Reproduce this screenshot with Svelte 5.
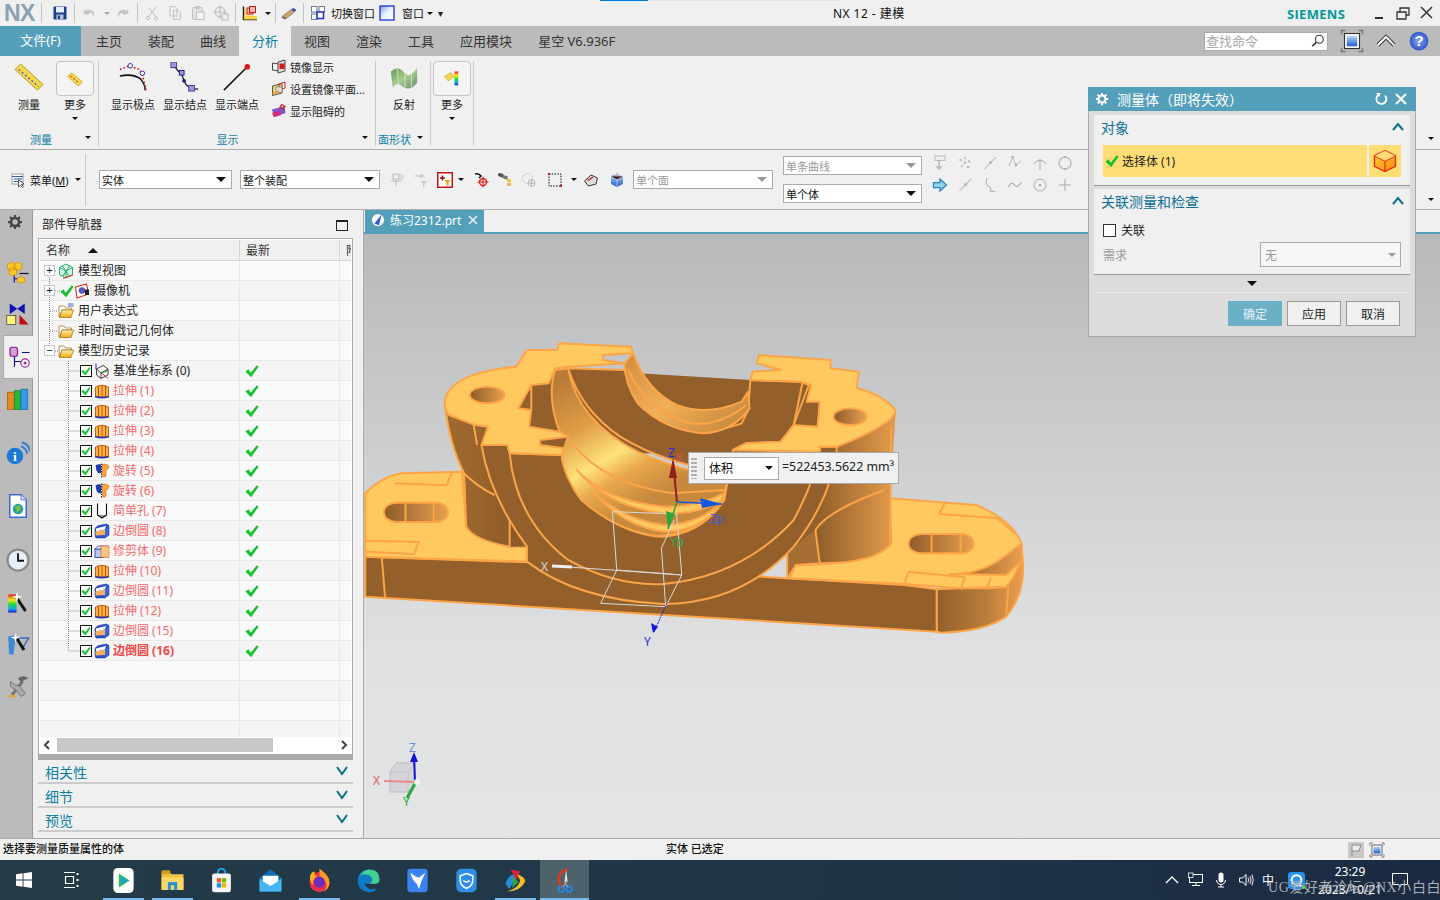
<script>
  const icons = {
    save: '<rect x="3" y="3" width="26" height="26" rx="2" fill="#1d3f8f"/><rect x="8" y="4" width="16" height="11" fill="#e6edf8"/><rect x="9" y="19" width="14" height="10" fill="#b4c0d6"/><rect x="12" y="21" width="4" height="7" fill="#1d3f8f"/>',
    undo: '<path d="M8 12 Q18 6 25 14 Q28 20 24 26 Q25 17 18 15 L14 20 L5 17 L6 8 Z" fill="#c4c4c4"/>',
    redo: '<path d="M24 12 Q14 6 7 14 Q4 20 8 26 Q7 17 14 15 L18 20 L27 17 L26 8 Z" fill="#c4c4c4"/>',
    cut: '<path d="M24 4 L10 22 M10 5 L24 24" stroke="#c0c0c0" stroke-width="2" fill="none"/><circle cx="8" cy="26" r="3.5" fill="none" stroke="#c0c0c0" stroke-width="2"/><circle cx="24" cy="27" r="3.5" fill="none" stroke="#c0c0c0" stroke-width="2"/>',
    copy: '<path d="M6 3 H16 L20 7 V22 H6 Z M13 11 H23 L27 15 V29 H13 Z" fill="#eee" stroke="#c4c4c4" stroke-width="2"/>',
    paste: '<rect x="5" y="5" width="20" height="24" rx="2" fill="#e4e4e4" stroke="#c0c0c0" stroke-width="2"/><rect x="10" y="2" width="10" height="6" fill="#c8c8c8"/><rect x="13" y="14" width="15" height="15" fill="#f4f4f4" stroke="#c0c0c0" stroke-width="2"/>',
    pan: '<circle cx="14" cy="14" r="10" fill="none" stroke="#bbb" stroke-width="2"/><path d="M14 1 V27 M1 14 H27" stroke="#bbb" stroke-width="2"/><rect x="18" y="18" width="12" height="12" fill="#eee" stroke="#bbb" stroke-width="2"/>',
    layers: '<path d="M3 3 V29 H30" stroke="#222" stroke-width="3" fill="#ffe680"/><rect x="4" y="22" width="26" height="7" fill="#f5d442"/><rect x="10" y="6" width="12" height="12" fill="#f3c0b0" stroke="#c8181e" stroke-width="2"/><rect x="15" y="3" width="12" height="12" fill="#f3c0b0" stroke="#c8181e" stroke-width="2"/>',
    eraser: '<path d="M3 22 L20 9 L27 14 L11 27 Z" fill="#c9a36a" stroke="#7a6540"/><path d="M20 9 L27 14 L31 10 L25 6 Z" fill="#2f4fb0"/><path d="M3 22 L11 27 L8 29 L1 25 Z" fill="#666"/>',
    switchwin: '<rect x="3" y="3" width="11" height="11" fill="#fff" stroke="#6c7d90" stroke-width="2"/><rect x="18" y="3" width="11" height="11" fill="#fff" stroke="#6c7d90" stroke-width="2"/><rect x="3" y="18" width="11" height="11" fill="#fff" stroke="#6c7d90" stroke-width="2"/><rect x="14" y="14" width="13" height="13" fill="#fff" stroke="#1c2fd0" stroke-width="3"/>',
    win: '<rect x="2" y="2" width="28" height="28" fill="url(#winG)" stroke="#1226e0" stroke-width="2.5"/>',
    fullscreen: '<path d="M2 7 V2 H7 M25 2 H30 V7 M30 25 V30 H25 M7 30 H2 V25" stroke="#777" stroke-width="2" fill="none"/><rect x="6" y="6" width="20" height="20" fill="#fff" stroke="#333" stroke-width="1.5"/><rect x="9" y="9" width="14" height="14" fill="url(#blueG)"/>',
    help: '<circle cx="16" cy="16" r="15" fill="url(#helpG)"/><text x="16" y="24" text-anchor="middle" font-size="24" font-weight="700" font-family="Liberation Sans" fill="#fff">?</text>',
    search: '<circle cx="19" cy="12" r="9" fill="#fff" stroke="#333" stroke-width="2.5"/><path d="M12 19 L3 28" stroke="#333" stroke-width="4"/>',
    ruler: '<path d="M1 8 L7 2 L31 24 L25 30 Z" fill="#f6d64a" stroke="#b59a28"/><path d="M5 8 L26 26" stroke="#3d5bd0" stroke-width="1.6" stroke-dasharray="2 2.5"/>',
    rulerS: '<path d="M4 12 L11 6 L28 21 L21 27 Z" fill="#f6d64a" stroke="#b59a28"/><path d="M9 11 L23 23" stroke="#d04040" stroke-width="2" stroke-dasharray="3 3"/>',
    poles: '<path d="M2 15 Q16 12 24 18 Q29 24 29 30" fill="none" stroke="#111" stroke-width="1.6"/><path d="M2 8 L12 4 L23 8 L26 14 L30 30" fill="none" stroke="#d0222a" stroke-width="1.6" stroke-dasharray="2 2"/><circle cx="13" cy="4" r="2.4" fill="#fff" stroke="#2222aa"/><circle cx="26" cy="12" r="2.4" fill="#fff" stroke="#2222aa"/>',
    knots: '<path d="M4 3 Q8 10 12 12 Q14 18 17 24 Q22 29 30 29" fill="none" stroke="#222" stroke-width="1.4"/><rect x="1" y="0" width="6" height="6" fill="#9a9ad8" stroke="#3a3a9a"/><rect x="10" y="9" width="5" height="5" fill="#9a9ad8" stroke="#1a1a8a"/><circle cx="15" cy="20" r="2" fill="#1a1a8a"/><rect x="20" y="25" width="6" height="6" fill="#9a9ad8" stroke="#3a3a9a"/>',
    ends: '<path d="M2 30 L27 5" stroke="#111" stroke-width="1.6"/><circle cx="27" cy="5" r="3" fill="#e01818"/>',
    mirror: '<path d="M3 8 L17 10 V24 L3 22 Z" fill="#eee" stroke="#444" stroke-width="2"/><path d="M14 6 L28 2 V24 L14 28 Z" fill="#ddd" stroke="#444" stroke-width="2"/><rect x="17" y="9" width="10" height="11" fill="#d81818"/>',
    mirrorset: '<path d="M3 10 L22 5 V24 L3 29 Z" fill="#e8d070" stroke="#555" stroke-width="2"/><path d="M16 6 L28 2 V14 L16 18 Z" fill="none" stroke="#d82020" stroke-width="2"/><rect x="10" y="12" width="12" height="11" fill="#ddd" stroke="#666"/><path d="M3 26 L16 20" stroke="#f0a020" stroke-width="3"/>',
    blocked: '<path d="M2 13 L27 6 L29 20 L6 28 Z" fill="#7a5ad0"/><path d="M2 20 L18 15 L20 24 L6 28 Z" fill="#d82a70"/><path d="M21 3 L28 7 L24 13 L18 9 Z" fill="none" stroke="#d82020" stroke-width="2.5"/>',
    reflect: '<path d="M2 10 Q10 3 17 12 Q22 18 30 6 L30 22 Q22 32 14 26 Q8 20 4 28 Z" fill="url(#reflG)"/><path d="M9 7 L10 24 M17 12 L17 28 M24 12 L24 27" stroke="#cde2b8" stroke-width="1"/>',
    rainbow: '<path d="M4 12 L14 6 L20 12 L10 19 Z" fill="#f6d64a" stroke="#b59a28"/><rect x="20" y="4" width="6" height="22" fill="url(#rainG)"/>',
    tree: '<rect x="4" y="4" width="22" height="20" fill="#fff" stroke="#777" stroke-width="1.5"/><path d="M4 9 H26 M7 14 H24 M7 19 H24" stroke="#345ca8" stroke-width="2"/><path d="M17 15 L17 30 L21 26 L25 31 L27 29 L23 25 L28 24 Z" fill="#fff" stroke="#222" stroke-width="1.5"/>',
    g1: '<path d="M8 4 H20 V14 H8 Z M14 14 V28 M4 18 H24" stroke="#c4c4c4" stroke-width="2.5" fill="none"/><circle cx="24" cy="10" r="5" fill="#ddd" stroke="#c4c4c4"/>',
    g2: '<path d="M4 8 H20 L16 4 M14 12 L20 8" stroke="#c8c8c8" stroke-width="3" fill="none"/><path d="M15 18 H28 L23 24 V30 H20 V24 Z" fill="#ccc"/>',
    filter: '<rect x="1.5" y="1.5" width="29" height="29" fill="#fff" stroke="#c01818" stroke-width="3"/><path d="M6 12 H16 M11 7 V17" stroke="#8c1010" stroke-width="3"/><path d="M15 16 H27 L23 22 V27 H19 V22 Z" fill="#e8a818"/>',
    selcross: '<path d="M4 4 Q12 2 16 8 L12 12" fill="none" stroke="#111" stroke-width="3"/><circle cx="20" cy="20" r="7" fill="none" stroke="#e01010" stroke-width="2.5"/><path d="M20 9 V31 M9 20 H31" stroke="#e01010" stroke-width="2"/>',
    binoc: '<rect x="2" y="3" width="12" height="7" rx="3" fill="#555" transform="rotate(20 8 6)"/><rect x="12" y="7" width="10" height="7" rx="3" fill="#777" transform="rotate(20 16 10)"/><rect x="20" y="14" width="8" height="6" fill="#e8c840"/><rect x="20" y="22" width="8" height="6" fill="#f0b060"/>',
    dashcirc: '<circle cx="13" cy="13" r="10" fill="none" stroke="#bbb" stroke-width="2" stroke-dasharray="3 2"/><circle cx="21" cy="22" r="7" fill="#eee" stroke="#aaa" stroke-width="1.5"/><path d="M21 15 V29 M14 22 H28" stroke="#aaa" stroke-width="1.5"/>',
    dashrect: '<rect x="4" y="4" width="24" height="24" fill="none" stroke="#111" stroke-width="2" stroke-dasharray="3 2.5"/><rect x="2" y="2" width="4" height="4" fill="#d01010"/><rect x="26" y="26" width="4" height="4" fill="#d01010"/>',
    scan: '<path d="M3 18 L16 6 L29 12 L26 24 L11 28 Z" fill="#ddd" stroke="#333" stroke-width="2"/><path d="M9 17 L20 10" stroke="#c01818" stroke-width="2.5"/>',
    bluebox: '<path d="M4 9 L16 3 L28 9 V24 L16 30 L4 24 Z" fill="url(#blueG)"/><path d="M4 9 L16 15 L28 9 M16 15 V30" stroke="#fff" stroke-width="1"/><path d="M16 1 V14 M6 6 L26 12" stroke="#e85060" stroke-width="1"/>',
    r1: '<rect x="6" y="2" width="20" height="9" fill="#eee" stroke="#bbb" stroke-width="2"/><path d="M14 11 V26 M9 22 L14 28 L19 22" stroke="#bbb" stroke-width="3" fill="none"/>',
    r2: '<circle cx="7" cy="10" r="2.5" fill="#bbb"/><circle cx="16" cy="6" r="2.5" fill="#ccc"/><circle cx="24" cy="13" r="2.5" fill="#bbb"/><circle cx="10" cy="22" r="2.5" fill="#ccc"/><circle cx="22" cy="24" r="2.5" fill="#bbb"/><circle cx="16" cy="15" r="2.5" fill="#bbb"/>',
    r3: '<path d="M5 28 L28 4" stroke="#aaa" stroke-width="2"/><circle cx="17" cy="15" r="2.5" fill="#aaa"/>',
    r4: '<path d="M4 22 L11 4 L18 20 L28 12" stroke="#bbb" stroke-width="2" fill="none"/><circle cx="11" cy="4" r="2.4" fill="#aaa"/><circle cx="18" cy="20" r="2.4" fill="#aaa"/>',
    r5: '<path d="M4 18 Q16 2 28 18 M16 8 V30" stroke="#aaa" stroke-width="2" fill="none"/>',
    r6: '<circle cx="16" cy="16" r="12" fill="none" stroke="#b8b8b8" stroke-width="2.5"/><circle cx="16" cy="4" r="2" fill="#aaa"/><circle cx="16" cy="28" r="2" fill="#aaa"/>',
    r7: '<path d="M10 2 Q6 14 12 18 Q20 20 16 28 L26 29" stroke="#aaa" stroke-width="2" fill="none"/>',
    r8: '<path d="M3 20 Q9 8 15 16 Q21 24 29 10" stroke="#aaa" stroke-width="2.4" fill="none"/>',
    r9: '<circle cx="16" cy="16" r="12" fill="none" stroke="#aaa" stroke-width="2"/><circle cx="16" cy="16" r="2" fill="#888"/>',
    r10: '<path d="M16 4 V28 M4 16 H28" stroke="#aaa" stroke-width="2"/>',
    arrow: '<path d="M3 11 H16 V4 L29 16 L16 28 V21 H3 Z" fill="#8fd4ec" stroke="#2a86b0" stroke-width="2.5"/>',
    gear: '<circle cx="16" cy="16" r="8" fill="none" stroke="currentColor" stroke-width="5"/><path d="M16 2 V7 M16 25 V30 M2 16 H7 M25 16 H30 M6 6 L9.5 9.5 M22.5 22.5 L26 26 M6 26 L9.5 22.5 M22.5 9.5 L26 6" stroke="currentColor" stroke-width="4.5"/>',
    asm: '<path d="M7 3 L12 5 V12 L7 14 L2 12 V5 Z M16 3 L21 5 V12 L16 14 L11 12 V5 Z M9 10 L14 12 V19 L9 21 L4 19 V12 Z" fill="#f6c82c" stroke="#d88c10"/><path d="M20 22 L25 24 V29 L20 31 L15 29 V24 Z" fill="#f6c82c" stroke="#d88c10"/><path d="M11 21 V30 M11 25 H15" stroke="#10108a" stroke-width="1.6"/><path d="M18 18 H30" stroke="#111" stroke-width="1.6"/>',
    constr: '<path d="M5 2 L15 9 L25 2 V16 L15 9 L5 16 Z" fill="#1212b8"/><rect x="1" y="18" width="12" height="12" fill="#fff27a" stroke="#444"/><path d="M18 30 V17 L30 30 Z" fill="#c40c0c"/>',
    parts: '<rect x="4" y="3" width="10" height="12" rx="3" fill="#d8a0d8" stroke="#8a1a8a" stroke-width="1.6"/><path d="M10 15 V29 M10 22 H20 M20 10 H30" stroke="#10108a" stroke-width="1.6"/><circle cx="24" cy="24" r="5.5" fill="#fff" stroke="#a02a90" stroke-width="1.6"/><circle cx="24" cy="24" r="2" fill="#a02a90"/>',
    books: '<rect x="2" y="7" width="9" height="23" fill="#e88a20" stroke="#a85a10"/><rect x="11" y="5" width="9" height="25" fill="#28b838" stroke="#18802a"/><rect x="20" y="3" width="9" height="27" fill="#3a9ae8" stroke="#1a6ab0"/>',
    info: '<circle cx="12" cy="20" r="11" fill="#1a7ad8"/><text x="12" y="27" text-anchor="middle" font-size="18" font-weight="700" font-family="Liberation Serif" fill="#fff">i</text><path d="M20 7 Q27 9 28 17 M21 2 Q31 4 32 14" stroke="#3a7ad0" stroke-width="2.6" fill="none"/>',
    web: '<path d="M5 1 H20 L27 8 V31 H5 Z" fill="#fff" stroke="#3a6ad8" stroke-width="2"/><path d="M20 1 V8 H27" fill="#cfe0fa" stroke="#3a6ad8"/><circle cx="16" cy="20" r="7" fill="#2aa0a8"/><path d="M12 17 L18 15 L20 20 L15 25 Z" fill="#7ac040"/>',
    clock: '<circle cx="16" cy="16" r="14" fill="#e8eef8" stroke="#8a8a8a" stroke-width="3"/><path d="M16 7 V17 H24" stroke="#111" stroke-width="2.4" fill="none"/>',
    roles: '<rect x="3" y="6" width="11" height="24" fill="url(#rainG)"/><path d="M14 10 L26 28" stroke="#111" stroke-width="4"/><path d="M15 2 L16 8 L22 9 L16 11 L15 17 L13 11 L8 9 L13 8 Z" fill="#fff"/>',
    hd3d: '<path d="M3 6 L13 4 L10 30 L4 30 Z" fill="#3a8ad8"/><path d="M14 8 H30 L22 22" stroke="#3a6ab8" stroke-width="2" fill="none"/><path d="M14 8 L24 24" stroke="#111" stroke-width="4"/><path d="M13 1 L14 6 L19 7 L14 9 L13 14 L11 9 L6 7 L11 6 Z" fill="#fff"/>',
    tools: '<path d="M8 28 L22 10" stroke="#777" stroke-width="4"/><path d="M16 6 Q24 0 30 6 L24 8 L21 12 Z" fill="#666"/><path d="M6 10 Q12 16 18 16 L26 26 L20 30 L12 20 Q4 18 6 10 Z" fill="#aaa" stroke="#666"/><path d="M3 28 H12 V31 H3 Z" fill="#f0a020"/>',
    folder: '<path d="M2 6 H12 L15 10 H27 V14 H8 L3 28 H2 Z" fill="#fff" stroke="#9a6a10" stroke-width="1.4"/><path d="M8 14 H31 L26 29 H3 Z" fill="url(#foldG)" stroke="#9a6a10" stroke-width="1.4"/>',
    folderexp: '<path d="M2 6 H12 L15 10 H27 V14 H8 L3 28 H2 Z" fill="#fff" stroke="#9a6a10" stroke-width="1.4"/><path d="M8 14 H31 L26 29 H3 Z" fill="url(#foldG)" stroke="#9a6a10" stroke-width="1.4"/><path d="M20 2 H31 M20 6 H31" stroke="#3a4ab8" stroke-width="1.8"/>',
    view: '<path d="M16 2 L29 9 V23 L16 30 L3 23 V9 Z M3 9 L16 16 L29 9 M16 16 V30 M9 6 L22 26 M23 6 L10 26" fill="#d8f2e0" stroke="#10a060" stroke-width="1.8"/><path d="M10 31 L30 24" stroke="#e03018" stroke-width="2"/>',
    camera: '<path d="M3 8 L25 2 L29 22 L6 30 Z" fill="#fff" stroke="#e02a18" stroke-width="2.2"/><circle cx="16" cy="15" r="6" fill="#5a5ad0" stroke="#2a2a90"/><rect x="22" y="13" width="8" height="11" fill="#222"/>',
    csys: '<path d="M5 12 L14 20 L28 12 L18 5 Z M5 12 V24 L14 31 L28 24 V12 M14 20 V31" fill="none" stroke="#333" stroke-width="1.8"/><path d="M4 13 V1" stroke="#1c1cc8" stroke-width="2"/><path d="M15 20 L29 15" stroke="#189a30" stroke-width="2"/><path d="M15 20 L28 31" stroke="#c81c1c" stroke-width="1.8"/>',
    extrude: '<path d="M3 8 Q16 1 29 8 V27 H3 Z" fill="#f8b848" stroke="#c84a10" stroke-width="1.8"/><path d="M9 6 V26 M16 5 V26 M23 6 V26" stroke="#c84a10" stroke-width="2"/><path d="M2 27 Q16 32 30 27" stroke="#1a3ab8" stroke-width="3.4" fill="none"/>',
    revolve: '<path d="M3 5 Q9 1 14 3 V20 Q8 22 5 15 Z" fill="#1a3ab8"/><path d="M16 3 Q24 0 30 6 Q29 13 24 14 V26 Q20 30 17 27 Z" fill="#f8a838" stroke="#c84a10"/><path d="M15 1 V31" stroke="#111" stroke-width="1.8" stroke-dasharray="3 2"/>',
    hole: '<path d="M7 1 V24 L16 30 L25 24 V1" fill="none" stroke="#111" stroke-width="2.2"/><path d="M9 26 H23" stroke="#111" stroke-width="1.6"/>',
    blend: '<path d="M2 12 Q3 7 9 5 L25 2 L30 5 V24 L22 30 H4 L2 26 Z" fill="#2a56c8" stroke="#1a2a88"/><path d="M4 11 L24 6 L22 13 L4 17 Z" fill="#fff"/><path d="M3 17 L22 13 V24 L3 25 Z" fill="#f8b060"/><path d="M22 13 L29 7 V22 L22 29 Z" fill="#3a6ae0"/>',
    trim: '<rect x="2" y="12" width="18" height="17" fill="#b8c8f0" stroke="#2a40b8" stroke-width="1.8"/><path d="M2 12 L8 6 H28 L20 12 Z" fill="#dfe6fa" stroke="#2a40b8" stroke-width="1.4"/><rect x="14" y="6" width="16" height="23" fill="#f6c878" stroke="#d82a1a" stroke-width="1.6" stroke-dasharray="2 1.5"/>',
    cube: '<path d="M16 2 L30 9 V23 L16 30 L2 23 V9 Z" fill="url(#cubeG)" stroke="#e82a10" stroke-width="1.8"/><path d="M2 9 L16 16 L30 9 M16 16 V30" stroke="#e82a10" stroke-width="1.6" fill="none"/><path d="M2 9 L16 2 L30 9 L16 16 Z" fill="#fff2a0" fill-opacity=".65"/>',
    check: '<path d="M1 17 L8 12 L13 20 L27 3 L31 6 L14 30 Z" fill="#16c12c"/>'
  };

  const tray = [
    { n: 'net', d: '<rect x="3" y="5" width="26" height="16" fill="none" stroke="#fff" stroke-width="2"/><path d="M16 21 V27 M8 27 H24" stroke="#fff" stroke-width="2"/><rect x="1" y="2" width="9" height="9" fill="#1b2a42" stroke="#fff" stroke-width="1.6"/>' },
    { n: 'mic', d: '<rect x="11" y="1" width="10" height="20" rx="5" fill="#fff"/><path d="M7 16 Q8 25 16 25 Q24 25 25 16 M16 25 V30 M10 30 H22" stroke="#fff" stroke-width="2" fill="none"/>' },
    { n: 'vol', d: '<path d="M3 12 H9 L16 5 V27 L9 20 H3 Z" fill="none" stroke="#fff" stroke-width="2"/><path d="M20 11 Q23 16 20 21 M24 8 Q28 16 24 24 M28 5 Q33 16 28 27" stroke="#fff" stroke-width="1.8" fill="none"/>' }
  ];

  const apps = [
    { d: '<rect x="3" y="0" width="26" height="32" rx="6" fill="#fff"/><path d="M10 7 L24 16 L10 25 Z" fill="#23c05a"/><path d="M13 11 L21 16 L13 21 Z" fill="#1f9ae8"/>', on: true },
    { d: '<path d="M2 6 H13 L15 8 H30 V28 H2 Z" fill="#f3c244"/><rect x="2" y="12" width="28" height="16" fill="#fbd968"/><rect x="10" y="18" width="12" height="10" fill="#2a90d8"/><rect x="14" y="22" width="4" height="6" fill="#fbd968"/><rect x="2" y="3" width="11" height="5" fill="#d99a20"/>', on: true },
    { d: '<path d="M11 8 Q11 1 16 1 Q21 1 21 8" fill="none" stroke="#1fa0e0" stroke-width="2.4"/><rect x="4" y="7" width="24" height="24" rx="3" fill="#f4f4f4"/><rect x="10" y="13" width="5.5" height="5.5" fill="#e85a20"/><rect x="16.5" y="13" width="5.5" height="5.5" fill="#7ab800"/><rect x="10" y="19.5" width="5.5" height="5.5" fill="#1f90e0"/><rect x="16.5" y="19.5" width="5.5" height="5.5" fill="#f4b400"/>' },
    { d: '<path d="M2 13 L16 2 L30 13 V30 H2 Z" fill="#1f9ae8"/><path d="M2 13 L16 2 L30 13 L16 21 Z" fill="#0f6cb8"/><path d="M2 14 L16 23 L30 14 V30 H2 Z" fill="#46b4f0"/><path d="M6 10 H26 V17 L16 23 L6 17 Z" fill="#fff"/>' },
    { d: '<circle cx="16" cy="18" r="13" fill="#e8304c"/><path d="M16 1 Q24 6 28 14 Q31 24 22 30 Q30 18 16 12 Z" fill="#ff9a1f"/><path d="M4 10 Q6 4 10 5 Q8 10 14 10 Q6 14 8 22 Q3 18 4 10 Z" fill="#ffb01f"/><circle cx="16" cy="18" r="7" fill="#6a2fc0"/>', on: true },
    { d: '<path d="M2 17 Q3 2 17 2 Q30 2 30 15 Q30 20 24 20 H11 Q13 27 22 27 L25 26 V29 Q20 31 16 31 Q3 30 2 17 Z" fill="#1278c8"/><path d="M5 10 Q10 2 17 2 Q30 2 30 15 Q30 20 24 20 H18 Q24 14 18 10 Q11 6 5 10 Z" fill="#40d090"/>' },
    { d: '<rect x="3" y="1" width="26" height="30" rx="4" fill="#3b82f0"/><path d="M7 6 Q14 12 18 12 L26 6 L21 17 L18 27 L15 20 Q9 16 7 6 Z" fill="#fff"/>' },
    { d: '<rect x="3" y="1" width="26" height="30" rx="6" fill="#2f8fe8"/><path d="M16 7 L24 10 V17 Q23 23 16 26 Q9 23 8 17 V10 Z" fill="none" stroke="#fff" stroke-width="2"/><path d="M12 16 Q16 20 20 16" stroke="#fff" stroke-width="2" fill="none"/>' },
    { d: '<path d="M3 20 Q8 6 20 7 L8 27 Z" fill="#2a8ad8"/><path d="M10 2 L22 4 L17 16 Z" fill="#d8203a"/><path d="M18 8 Q30 12 28 18 Q22 30 5 30 Q20 26 22 16 Z" fill="#f4c020"/><path d="M12 10 L20 18 L12 26 Z" fill="#30a050"/>', on: true },
    { d: '<path d="M20 2 Q8 4 9 16 L12 26" stroke="#d83a1a" stroke-width="3.4" fill="none"/><path d="M18 2 L20 18 L16 18 Z" fill="#e8e8e8"/><circle cx="12" cy="27" r="3.5" fill="none" stroke="#1f8ae8" stroke-width="2.4"/><circle cx="22" cy="27" r="3.5" fill="none" stroke="#1f8ae8" stroke-width="2.4"/><path d="M14 24 L20 16 M20 24 L16 18" stroke="#999" stroke-width="2"/>', on: true, active: true }
  ];

  const tabs = ['主页', '装配', '曲线', '分析', '视图', '渲染', '工具', '应用模块', '星空 V6.936F'];

  const rail = [
    { i: 'asm', cls: 'a' }, { i: 'constr', cls: 'b' }, { i: 'parts', cls: 'c', active: true },
    { i: 'books', cls: 'd' }, { i: 'info', cls: 'e' }, { i: 'web', cls: 'f' },
    { i: 'clock', cls: 'g' }, { i: 'roles', cls: 'h' }, { i: 'hd3d', cls: 'h2' }, { i: 'tools', cls: 'h2' }
  ];

  const rows = [
    { t: '模型视图', exp: '+', icon: 'view' },
    { t: '摄像机', exp: '+', icon: 'camera', tick: true },
    { t: '用户表达式', icon: 'folderexp' },
    { t: '非时间戳记几何体', icon: 'folder' },
    { t: '模型历史记录', exp: '−', icon: 'folder' },
    { t: '基准坐标系 (0)', icon: 'csys', feat: true },
    { t: '拉伸 (1)', icon: 'extrude', feat: true, red: true },
    { t: '拉伸 (2)', icon: 'extrude', feat: true, red: true },
    { t: '拉伸 (3)', icon: 'extrude', feat: true, red: true },
    { t: '拉伸 (4)', icon: 'extrude', feat: true, red: true },
    { t: '旋转 (5)', icon: 'revolve', feat: true, red: true },
    { t: '旋转 (6)', icon: 'revolve', feat: true, red: true },
    { t: '简单孔 (7)', icon: 'hole', feat: true, red: true },
    { t: '边倒圆 (8)', icon: 'blend', feat: true, red: true },
    { t: '修剪体 (9)', icon: 'trim', feat: true, red: true },
    { t: '拉伸 (10)', icon: 'extrude', feat: true, red: true },
    { t: '边倒圆 (11)', icon: 'blend', feat: true, red: true },
    { t: '拉伸 (12)', icon: 'extrude', feat: true, red: true },
    { t: '边倒圆 (15)', icon: 'blend', feat: true, red: true },
    { t: '边倒圆 (16)', icon: 'blend', feat: true, red: true, bold: true },
    {}, {}, {}, {}
  ];

  const rightTop = ['r1', 'r2', 'r3', 'r4', 'r5', 'r6'];
  const rightBottom = ['arrow', 'r3', 'r7', 'r8', 'r9', 'r10'];
</script>

{#snippet ic(name, cls = 'i16')}
  <svg class="ic {cls}" viewBox="0 0 32 32">{@html icons[name]}</svg>
{/snippet}

{#snippet combo(text, cls = '')}
  <div class="combo {cls}"><span>{text}</span><i class="tri"></i></div>
{/snippet}

<div class="app">
  <svg class="defs" width="0" height="0">
    <defs>
      <linearGradient id="winG" x1="0" y1="0" x2="1" y2="1"><stop offset="0" stop-color="#7aa0e0"/><stop offset=".5" stop-color="#eef3fb"/><stop offset="1" stop-color="#fff"/></linearGradient>
      <linearGradient id="blueG" x1="0" y1="0" x2="0" y2="1"><stop offset="0" stop-color="#bcd8f6"/><stop offset="1" stop-color="#1f5ec8"/></linearGradient>
      <radialGradient id="helpG"><stop offset="0" stop-color="#8aaaf0"/><stop offset="1" stop-color="#2f56c8"/></radialGradient>
      <linearGradient id="reflG" x1="0" y1="0" x2="1" y2="1"><stop offset="0" stop-color="#5f9a58"/><stop offset=".5" stop-color="#a8cc90"/><stop offset="1" stop-color="#6a8a70"/></linearGradient>
      <linearGradient id="rainG" x1="0" y1="0" x2="0" y2="1"><stop offset="0" stop-color="#e81818"/><stop offset=".3" stop-color="#f8e818"/><stop offset=".55" stop-color="#18d838"/><stop offset=".8" stop-color="#18a8e8"/><stop offset="1" stop-color="#1818c8"/></linearGradient>
      <linearGradient id="foldG" x1="0" y1="0" x2="0" y2="1"><stop offset="0" stop-color="#fff2a8"/><stop offset="1" stop-color="#f2a810"/></linearGradient>
      <linearGradient id="cubeG" x1="0" y1="0" x2="1" y2="1"><stop offset="0" stop-color="#ffd030"/><stop offset="1" stop-color="#f88a10"/></linearGradient>
      <linearGradient id="sideR" gradientUnits="userSpaceOnUse" x1="1330" y1="0" x2="1530" y2="0"><stop offset="0" stop-color="#93602c"/><stop offset=".55" stop-color="#b87c3a"/><stop offset="1" stop-color="#ec9f4c"/></linearGradient>
      <linearGradient id="pillarR" gradientUnits="userSpaceOnUse" x1="1060" y1="0" x2="1230" y2="0"><stop offset="0" stop-color="#93602c"/><stop offset="1" stop-color="#e29a4a"/></linearGradient>
      <linearGradient id="pillarL" gradientUnits="userSpaceOnUse" x1="195" y1="0" x2="345" y2="0"><stop offset="0" stop-color="#a06a30"/><stop offset=".5" stop-color="#9a652d"/><stop offset="1" stop-color="#8d5b29"/></linearGradient>
      <linearGradient id="bore" gradientUnits="userSpaceOnUse" x1="450" y1="160" x2="700" y2="480"><stop offset="0" stop-color="#b87c36"/><stop offset=".35" stop-color="#e09c46"/><stop offset=".62" stop-color="#ffe27a"/><stop offset=".78" stop-color="#e8a64c"/><stop offset="1" stop-color="#c78a3c"/></linearGradient>
      <linearGradient id="ringB" gradientUnits="userSpaceOnUse" x1="610" y1="60" x2="880" y2="300"><stop offset="0" stop-color="#d08a3c"/><stop offset=".5" stop-color="#f0b058"/><stop offset="1" stop-color="#c4853a"/></linearGradient>
      <linearGradient id="holeG" x1="0" y1="0" x2="1" y2="0"><stop offset="0" stop-color="#8e5c2a"/><stop offset="1" stop-color="#e8a04e"/></linearGradient>
    </defs>
  </svg>

  <div class="progress"><span></span></div>

  <header class="titlebar">
    <span class="logo">NX</span><i class="vs first"></i>
    <span class="qa">{@render ic('save')}</span><i class="vs"></i>
    <span class="qa">{@render ic('undo')}</span><i class="tri g small"></i>
    <span class="qa">{@render ic('redo')}</span><i class="vs"></i>
    <span class="qa">{@render ic('cut')}</span>
    <span class="qa wide">{@render ic('copy')}</span>
    <span class="qa wide">{@render ic('paste')}</span>
    <span class="qa wide">{@render ic('pan')}</span><i class="vs"></i>
    <span class="qa">{@render ic('layers')}</span><i class="tri small"></i><i class="vs n"></i>
    <span class="qa">{@render ic('eraser')}</span><i class="vs"></i>
    <span class="qa">{@render ic('switchwin')}</span>
    <span class="qt">切换窗口</span>
    <span class="qa win">{@render ic('win')}</span>
    <span class="qt">窗口</span>
    <i class="tri small tw"></i>
    <span class="more">▾</span>
    <span class="title">NX 12 - 建模</span>
    <span class="siemens">SIEMENS</span>
    <svg class="wc" width="70" height="16" viewBox="0 0 70 16">
      <path d="M1 12 H9" stroke="#333" stroke-width="2"/>
      <path d="M23 6 H32 V13 H23 Z M26 6 V2 H35 V9 H32" fill="none" stroke="#333" stroke-width="1.3"/>
      <path d="M47 1 L58 12 M58 1 L47 12" stroke="#333" stroke-width="1.5"/>
    </svg>
  </header>

  <nav class="tabs">
    <div class="file">文件(F)</div>
    <div class="tablist">
      {#each tabs as t}
        <div class="tab" class:on={t === '分析'}>{t}</div>
      {/each}
    </div>
    <div class="tabtools">
      <div class="search"><span>查找命令</span>{@render ic('search', 'i14')}</div>
      {@render ic('fullscreen', 'i24')}
      <svg class="chev" width="22" height="14" viewBox="0 0 22 14"><path d="M3 11 L11 3 L19 11" fill="none" stroke="#333" stroke-width="4"/><path d="M3 11 L11 3 L19 11" fill="none" stroke="#fff" stroke-width="2"/></svg>
      {@render ic('help', 'i20')}
    </div>
  </nav>

  <section class="ribbon">
    <div class="grp g1">
      <div class="gbody">
        <div class="big">{@render ic('ruler', 'i32')}<span>测量</span></div>
        <div class="big boxed"><div class="box">{@render ic('rulerS', 'i20')}</div><span>更多</span><i class="tri small"></i></div>
      </div>
      <div class="gfoot"><span>测量</span><i class="tri small"></i></div>
    </div>
    <div class="grp g2">
      <div class="gbody">
        <div class="big">{@render ic('poles', 'i32')}<span>显示极点</span></div>
        <div class="big">{@render ic('knots', 'i32')}<span>显示结点</span></div>
        <div class="big">{@render ic('ends', 'i32')}<span>显示端点</span></div>
        <div class="list">
          <div>{@render ic('mirror')}<span>镜像显示</span></div>
          <div>{@render ic('mirrorset')}<span>设置镜像平面...</span></div>
          <div>{@render ic('blocked')}<span>显示阻碍的</span></div>
        </div>
      </div>
      <div class="gfoot"><span>显示</span><i class="tri small"></i></div>
    </div>
    <div class="grp g3">
      <div class="gbody">
        <div class="big">{@render ic('reflect', 'i32')}<span>反射</span></div>
      </div>
      <div class="gfoot"><span>面形状</span><i class="tri small"></i></div>
    </div>
    <div class="grp g4">
      <div class="gbody">
        <div class="big boxed"><div class="box">{@render ic('rainbow', 'i20')}</div><span>更多</span><i class="tri small"></i></div>
      </div>
    </div>
    <i class="tri small rb-end"></i>
  </section>

  <section class="toolbar">
    <div class="menu">{@render ic('tree')}<span>菜单(<u>M</u>)</span><i class="tri small"></i></div>
    {@render combo('实体', 'c1')}
    {@render combo('整个装配', 'c2')}
    <span class="tb">{@render ic('g1', 'i16')}</span>
    <span class="tb">{@render ic('g2', 'i16')}</span>
    <span class="tb">{@render ic('filter', 'i16')}</span>
    <i class="tri small t1"></i>
    <span class="tb">{@render ic('selcross', 'i16')}</span>
    <span class="tb">{@render ic('binoc', 'i16')}</span>
    <span class="tb">{@render ic('dashcirc', 'i16')}</span>
    <span class="tb d">{@render ic('dashrect', 'i16')}</span>
    <i class="tri small t2"></i>
    <span class="tb">{@render ic('scan', 'i16')}</span>
    <span class="tb e">{@render ic('bluebox', 'i16')}</span>
    {@render combo('单个面', 'c3 off')}
    <div class="stack">
      {@render combo('单条曲线', 'c4 off')}
      {@render combo('单个体', 'c4')}
    </div>
    <div class="rgrid">
      {#each rightTop as n}<span>{@render ic(n, 'i16')}</span>{/each}
      {#each rightBottom as n}<span>{@render ic(n, 'i16')}</span>{/each}
    </div>
    <div class="tb-ends"><i class="tri small"></i></div>
  </section>

  <main class="main">
    <aside class="rail">
      <div class="railgear">{@render ic('gear', 'i16')}</div>
      {#each rail as r}
        <div class="railitem {r.cls}" class:active={r.active}>{@render ic(r.i, 'i24')}</div>
      {/each}
    </aside>

    <section class="nav">
      <div class="navhead"><span>部件导航器</span><i class="maxbox"></i></div>
      <div class="tree">
        <div class="thead">
          <div class="tc name"><span>名称</span><i class="up"></i></div>
          <div class="tc latest">最新</div>
          <div class="tc rest">附</div>
        </div>
        <div class="tbody">
          <svg class="lines" width="60" height="400" viewBox="0 0 60 400">
            <path d="M9.5 10 V90 M15 10 H17 M15 30 H20 M10 50 H18 M10 70 H18 M15 90 H18 M28.5 100 V390 M28.5 110 H40 M28.5 130 H40 M28.5 150 H40 M28.5 170 H40 M28.5 190 H40 M28.5 210 H40 M28.5 230 H40 M28.5 250 H40 M28.5 270 H40 M28.5 290 H40 M28.5 310 H40 M28.5 330 H40 M28.5 350 H40 M28.5 370 H40 M28.5 390 H40" stroke="#888" stroke-dasharray="1 1" fill="none"/>
          </svg>
          {#each rows as r}
            <div class="row">
              <div class="cn" class:feat={r.feat}>
                {#if r.exp}<i class="exp">{r.exp}</i>{/if}
                {#if r.feat}<i class="cb">{@render ic('check', 'i12')}</i>{/if}
                {#if r.tick}<span class="tick">{@render ic('check', 'i14')}</span>{/if}
                {#if r.icon}<span class="ri">{@render ic(r.icon)}</span>{/if}
                {#if r.t}<span class="rt" class:red={r.red} class:bold={r.bold}>{r.t}</span>{/if}
              </div>
              <div class="cl">{#if r.feat}{@render ic('check', 'i14')}{/if}</div>
              <div class="cr"></div>
            </div>
          {/each}
        </div>
        <div class="hscroll">
          <svg width="10" height="10" viewBox="0 0 10 10"><path d="M7 1 L3 5 L7 9" fill="none" stroke="#444" stroke-width="2"/></svg>
          <div class="track"><div class="thumb"></div></div>
          <svg width="10" height="10" viewBox="0 0 10 10"><path d="M3 1 L7 5 L3 9" fill="none" stroke="#444" stroke-width="2"/></svg>
        </div>
      </div>
      <div class="splitter"></div>
      {#each ['相关性', '细节', '预览'] as s}
        <div class="acc">
          <span>{s}</span>
          <svg width="12" height="10" viewBox="0 0 12 10"><path d="M1 1 L6 8 L11 1" fill="none" stroke="#0d6f8e" stroke-width="2"/></svg>
        </div>
      {/each}
    </section>

    <section class="view">
      <div class="vtabs">
        <div class="vtab">
          <svg width="14" height="14" viewBox="0 0 32 32"><circle cx="16" cy="16" r="14" fill="#f4f8ff"/><path d="M8 24 L24 4 L18 28 Z" fill="#2f56c8"/></svg>
          <span>练习2312.prt</span>
          <svg width="10" height="10" viewBox="0 0 10 10"><path d="M1 1 L9 9 M9 1 L1 9" stroke="#e8f2f6" stroke-width="1.6"/></svg>
        </div>
      </div>
      <div class="canvas">
        <svg class="scene" viewBox="364 234 1076 604" width="1076" height="604">
          <g class="model" transform="translate(360 330) scale(.4337 .3333)">
            <path class="dk" d="M12 680 L390 697 L985 745 L1255 765 L1330 778 L1330 905 L12 800 Z"/>
            <path fill="url(#sideR)" class="st" d="M1330 778 L1385 775 L1450 775 L1490 770 L1528 690 Q1535 790 1490 860 Q1440 905 1340 908 L1330 905 Z"/>
            <path class="ln" d="M50 680 L58 805 M1495 770 L1490 850"/>
            <path class="tp" d="M12 490 Q50 440 95 430 L235 425 L245 590 L340 650 L385 650 L388 695 L12 680 Z"/>
            <path class="ln" d="M80 460 L200 466 L212 426 M12 632 L135 636 L125 672 L12 665"/>
            <rect class="hole" x="55" y="518" width="148" height="58" rx="29"/>
            <path class="ln" d="M105 520 V575 M170 520 V575"/>
            <path class="tp" d="M1005 705 Q1150 710 1225 640 L1222 505 L1420 525 Q1505 570 1525 640 Q1530 710 1490 770 L1385 775 L1255 762 L990 745 Z"/>
            <path fill="url(#sideR)" class="st" d="M1360 732 Q1440 735 1505 660 L1525 640 L1528 690 L1490 735 Z"/>
            <path class="ln" d="M1350 515 L1335 552 L1470 565 L1510 610 M1265 725 L1395 742 L1385 775 M1265 725 L1255 762 M1455 742 L1445 775"/>
            <rect class="hole" x="1265" y="612" width="150" height="58" rx="29"/>
            <path class="ln" d="M1318 615 V668 M1385 615 V668"/>
            <path class="fill-step" d="M1052 590 L985 650 L985 745 L1005 705 L1062 700 Z"/>
            <path fill="url(#pillarR)" d="M1090 350 L1235 250 L1222 505 L1225 640 Q1190 700 1060 700 L1050 600 L1000 650 Q1090 500 1100 350 Z"/>
            <path class="ln" d="M1050 600 L1060 700 M1050 600 Q1080 540 1210 480 M1060 700 Q1190 700 1225 640 M1225 290 L1222 640"/>
            <path fill="url(#pillarL)" d="M195 215 Q205 340 240 430 L245 590 Q260 630 345 650 L385 650 L280 345 L295 290 L265 285 L205 255 Z"/>
            <path class="ln" d="M195 215 Q205 340 240 430 L245 590 Q260 630 345 650 M240 430 Q270 470 310 495 M262 285 L270 345 M345 560 L345 650"/>
            <path fill="#93602c" d="M280 345 L365 235 L395 165 L450 115 L900 150 L1040 165 L1060 215 L1100 350 L860 365 L465 375 Z"/>
            <path class="dk" d="M280 345 L340 345 L345 370 L465 375 Q470 470 570 565 Q640 620 700 620 Q790 610 840 510 L860 360 L1060 365 L1060 350 L1100 350 Q1090 500 1000 650 Q880 820 700 822 Q500 810 385 695 L385 650 Q300 500 280 345 Z"/>
            <path class="ln" d="M345 370 Q360 570 480 690 Q590 770 700 762 Q880 740 1000 570 Q1050 450 1062 350"/>
            <path class="dk" d="M480 115 L610 120 Q640 220 720 285 Q800 320 880 280 L895 240 L900 150 L1015 155 L1035 165 L1000 285 L970 335 L890 340 L860 360 L850 430 Q700 400 600 320 Q510 240 480 115 Z"/>
            <path fill="url(#ringB)" class="st" d="M610 100 L630 70 Q660 180 730 225 Q800 260 880 215 L895 185 L898 235 Q860 305 790 310 Q700 300 640 220 Q610 160 610 100 Z"/>
            <path class="ln" d="M618 120 Q660 240 760 280 Q830 290 890 225"/>
            <path fill="url(#bore)" class="st" d="M450 120 L480 115 Q500 270 640 365 Q740 425 850 442 L835 510 Q790 610 690 618 Q600 610 510 510 Q470 440 465 375 L470 355 L480 320 L460 305 Q430 200 450 120 Z"/>
            <path class="ln" d="M490 340 Q560 460 720 490 L840 480"/>
            <path class="tp" d="M500 420 Q560 510 700 530 Q780 530 838 490 L835 510 Q780 555 700 550 Q570 530 500 420 Z"/>
            <path class="tp" d="M540 490 Q610 570 700 585 Q770 585 822 530 L815 550 Q770 605 700 605 Q610 590 540 490 Z"/>
            <path class="tp" d="M195 215 Q205 130 360 110 L385 60 L455 60 L460 40 L625 50 L630 70 L560 75 L560 90 L610 100 L480 110 L450 115 L435 160 L395 165 L365 235 L395 240 L390 290 L460 305 L480 320 L415 330 L415 345 L470 355 L465 375 L345 370 L340 345 L280 345 L295 290 L265 285 L205 255 Q195 240 195 215 Z"/>
            <path class="tp" d="M920 75 L1085 90 L1085 115 L1150 125 L1145 175 Q1200 190 1235 240 Q1235 280 1100 350 L1060 350 L1060 365 L860 360 L890 340 L970 335 L1000 285 L1055 290 L1060 215 L1030 215 L1040 165 L1015 155 L900 150 L905 125 L970 120 L915 100 Z"/>
            <path class="ln" d="M395 165 L395 240 M1000 285 L1020 160"/>
            <ellipse class="hole" cx="293" cy="195" rx="40" ry="25"/>
            <ellipse class="hole" cx="1130" cy="260" rx="38" ry="25"/>
            <path class="wire" d="M582 545 L730 552 L742 735 L592 720 Z M592 720 L555 820 L705 830 L742 735 M725 570 L695 655 L705 830 M470 710 L742 735"/>
          </g>
          <path d="M552 566 L572 567" stroke="#eee" stroke-width="3"/>
          <text class="ax grey" x="541" y="571">X</text>
          <path d="M677 502 L673 462" stroke="#8e1f1c" stroke-width="2"/>
          <path d="M673 458 L677 478 L669 478 Z" fill="#8e1f1c"/>
          <path d="M677 502 L722 504" stroke="#1558e0" stroke-width="1.5"/>
          <path d="M722 504 L700 498 L702 508 Z" fill="#1558e0"/>
          <path d="M677 502 L668 529" stroke="#2aa83a" stroke-width="1.5"/>
          <path d="M668 529 L666 511 L675 514 Z" fill="#2aa83a"/>
          <path d="M667 603 L654 632" stroke="#1414e0" stroke-dasharray="2 1"/>
          <path d="M653 633 L651 623 L658 627 Z" fill="#1414e0"/>
          <text class="ax" fill="#2a2ae0" x="668" y="457">Z</text>
          <text class="ax" fill="#e05050" x="676" y="462">X</text>
          <text class="ax" fill="#3a5ae8" x="710" y="523">Zp</text>
          <text class="ax" fill="#3aa84a" x="670" y="546">Yp</text>
          <text class="ax" fill="#2a2ae0" x="644" y="646">Y</text>
          <g class="triad">
            <path d="M390 772 L396 763 L415 763 L415 783 L408 792 L390 792 Z" fill="#d4d5d8" stroke="#bcbcbc"/>
            <path d="M390 772 H408 V792 M408 772 L415 763" fill="none" stroke="#c4c4c4"/>
            <path d="M384 781 L416 782" stroke="#e88" stroke-width="2"/>
            <path d="M415 782 L414 756" stroke="#1414d8" stroke-width="2"/>
            <path d="M414 752 L418 762 L410 762 Z" fill="#1414d8"/>
            <path d="M416 782 L407 798" stroke="#2aa83a" stroke-width="3"/>
            <circle cx="417" cy="782" r="3" fill="#f4f4f4"/>
            <text class="ax" fill="#6a8ae8" x="409" y="752">Z</text>
            <text class="ax" fill="#e06060" x="373" y="785">X</text>
            <text class="ax" fill="#2aa83a" x="403" y="806">Y</text>
          </g>
        </svg>
      </div>
    </section>
  </main>

  <footer class="status">
    <span class="s1">选择要测量质量属性的体</span>
    <span class="s2">实体 已选定</span>
    <span class="s3">
      <svg width="16" height="16" viewBox="0 0 16 16"><rect width="16" height="16" fill="#c8c8c8"/><path d="M4 14 V3 L13 3 L11 9 L4 9" fill="#eee" stroke="#888"/></svg>
      {@render ic('fullscreen', 'i16')}
    </span>
  </footer>

  <div class="taskbar">
    <svg class="start" width="16" height="16" viewBox="0 0 16 16"><path d="M0 2.3 L6.6 1.3 V7.5 H0 Z M7.5 1.2 L16 0 V7.5 H7.5 Z M0 8.5 H6.6 V14.7 L0 13.7 Z M7.5 8.5 H16 V16 L7.5 14.8 Z" fill="#fff"/></svg>
    <svg class="taskview" width="16" height="16" viewBox="0 0 16 16"><path d="M1 0.5 H12 M1 15.5 H12 M2.5 4.5 H10.5 V11.5 H2.5 Z" fill="none" stroke="#fff" stroke-width="1.2"/><rect x="13.5" y="1" width="2" height="2" fill="#fff"/><rect x="13.5" y="7" width="2" height="2" fill="#fff"/><rect x="13.5" y="13" width="2" height="2" fill="#fff"/></svg>
    {#each apps as a}
      <div class="app-i" class:on={a.on} class:active={a.active}>
        <svg width="25" height="25" viewBox="0 0 32 32">{@html a.d}</svg>
      </div>
    {/each}
    <div class="tray">
      <svg width="14" height="10" viewBox="0 0 14 10"><path d="M1 8 L7 2 L13 8" fill="none" stroke="#fff" stroke-width="1.4"/></svg>
      {#each tray as t}
        <svg class="tr" width="16" height="16" viewBox="0 0 32 32">{@html t.d}</svg>
      {/each}
      <span class="zh">中</span>
      <svg class="qq" width="17" height="17" viewBox="0 0 32 32"><rect width="32" height="32" rx="6" fill="#2a90f0"/><circle cx="16" cy="15" r="9" fill="none" stroke="#fff" stroke-width="4"/><path d="M20 22 L25 27" stroke="#fff" stroke-width="4"/><circle cx="29" cy="29" r="3" fill="#7ad020"/></svg>
      <div class="clock"><span>23:29</span><span>2023/10/21</span></div>
      <svg class="note" width="16" height="15" viewBox="0 0 16 15"><path d="M0.5 0.5 H15.5 V11.5 H9.5 L8 14 L6.5 11.5 H0.5 Z" fill="none" stroke="#fff"/></svg>
    </div>
  </div>

  <div class="mark">UG爱好者论坛@NX小白白</div>

  <div class="tip">
    <i class="grip"></i>
    {@render combo('体积', 'c5')}
    <span class="val">=522453.5622 mm³</span>
  </div>

  <div class="dialog">
    <div class="dtitle">
      <span class="dgear">{@render ic('gear', 'i14')}</span>
      <span class="dname">测量体（即将失效）</span>
      <svg width="14" height="14" viewBox="0 0 14 14"><path d="M11 3.5 A5 5 0 1 1 4.5 2.8" fill="none" stroke="#fff" stroke-width="1.8"/><path d="M2 1 L6.5 1 L5.5 5 Z" fill="#fff"/></svg>
      <svg width="12" height="12" viewBox="0 0 12 12"><path d="M1 1 L11 11 M11 1 L1 11" stroke="#fff" stroke-width="2"/></svg>
    </div>
    <div class="dsec one">
      <div class="dhead"><span>对象</span><svg width="12" height="9" viewBox="0 0 12 9"><path d="M1 8 L6 2 L11 8" fill="none" stroke="#0d6f8e" stroke-width="2"/></svg></div>
      <div class="sel">
        <div class="selmain">{@render ic('check', 'i14')}<span>选择体 (1)</span></div>
        <div class="selcube">{@render ic('cube', 'i24')}</div>
      </div>
    </div>
    <div class="dsec two">
      <div class="dhead"><span>关联测量和检查</span><svg width="12" height="9" viewBox="0 0 12 9"><path d="M1 8 L6 2 L11 8" fill="none" stroke="#0d6f8e" stroke-width="2"/></svg></div>
      <label class="chk"><i></i><span>关联</span></label>
      <div class="need"><span>需求</span>{@render combo('无', 'c6 off')}</div>
    </div>
    <div class="dmore"><i class="tri big-tri"></i></div>
    <div class="dbtns">
      <button class="ok">确定</button>
      <button>应用</button>
      <button>取消</button>
    </div>
  </div>
</div>

<style>
  :global(body) {
    margin: 0;
    background: #f0f0f0;
  }

  .app {
    position: relative;
    width: 1440px;
    height: 900px;
    overflow: hidden;
    display: flex;
    flex-direction: column;
    background: #f0f0f0;
    color: #222;
    font-family: "Noto Sans", "Noto Sans CJK SC", sans-serif;
    font-size: 11px;
  }

  .defs {
    position: absolute;
  }

  .ic {
    display: block;
    flex: none;
  }
  .i12 { width: 12px; height: 12px; }
  .i14 { width: 14px; height: 14px; }
  .i16 { width: 16px; height: 16px; }
  .i20 { width: 20px; height: 20px; }
  .i24 { width: 24px; height: 24px; }
  .i32 { width: 30px; height: 30px; }

  .tri {
    display: block;
    flex: none;
    width: 0;
    height: 0;
    border-left: 5px solid transparent;
    border-right: 5px solid transparent;
    border-top: 5px solid #111;
  }
  .tri.small {
    border-left-width: 3.5px;
    border-right-width: 3.5px;
    border-top-width: 3.5px;
  }
  .tri.g {
    border-top-color: #aaa;
  }

  .progress {
    position: absolute;
    left: 600px;
    top: 0;
    width: 240px;
    height: 1px;
    background: #e4e4e4;
  }
  .progress span {
    display: block;
    width: 48px;
    height: 1px;
    background: #0078d7;
  }

  .titlebar {
    height: 26px;
    display: flex;
    align-items: center;
    flex: none;
    position: relative;
  }
  .logo {
    width: 40px;
    padding-left: 4px;
    box-sizing: border-box;
    font: 700 23px "Liberation Sans", sans-serif;
    color: #8ba2b4;
    letter-spacing: -0.5px;
  }
  .vs {
    display: block;
    flex: none;
    width: 1px;
    height: 20px;
    background: #c4c4c4;
    margin: 0 3px;
  }
  .vs.first {
    margin: 0 7px 0 1px;
  }
  .vs.n {
    margin: 0 2px;
  }
  .qa {
    width: 22px;
    display: flex;
    justify-content: center;
  }
  .qa.wide {
    width: 23px;
  }
  .qa.win {
    margin-left: -1px;
    margin-right: 2px;
  }
  .qt {
    font-size: 11px;
    color: #111;
    margin-left: 2px;
    margin-right: 2px;
  }
  .more {
    font-size: 10px;
    margin-left: 5px;
  }
  .titlebar .tri.small {
    margin: 0 2.5px 0 3.5px;
  }
  .titlebar .tri.tw {
    margin: 0 0 0 0.5px;
  }
  .title {
    position: absolute;
    left: 833px;
    top: 4px;
    font-size: 12px;
    letter-spacing: 0.45px;
    color: #111;
  }
  .siemens {
    position: absolute;
    left: 1287px;
    top: 5px;
    font: 700 13px "Open Sans", sans-serif;
    color: #009999;
    letter-spacing: 0.3px;
  }
  .wc {
    position: absolute;
    left: 1374px;
    top: 6px;
  }

  .tabs {
    height: 30px;
    flex: none;
    display: flex;
    align-items: stretch;
    background: #bbb;
    font-size: 13px;
    color: #333;
  }
  .file {
    width: 81px;
    box-sizing: border-box;
    padding-bottom: 3px;
    background: #549fb9;
    color: #fff;
    display: flex;
    align-items: center;
    justify-content: center;
  }
  .tablist {
    display: flex;
    margin-left: 2px;
  }
  .tab {
    padding: 0 13px;
    line-height: 30px;
  }
  .tab.on {
    background: #f0f0f0;
    color: #0a7fa6;
  }
  .tabtools {
    margin-left: auto;
    display: flex;
    align-items: center;
    padding-right: 11px;
  }
  .search {
    width: 124px;
    height: 19px;
    box-sizing: border-box;
    background: #fff;
    border: 1px solid #aaa;
    color: #aaa;
    display: flex;
    align-items: center;
    justify-content: space-between;
    padding: 0 2px 0 1px;
    margin-right: 12px;
  }
  .search span {
    padding-bottom: 2px;
  }
  .chev {
    margin: 0 12px 0 11px;
  }

  .ribbon {
    height: 94px;
    flex: none;
    box-sizing: border-box;
    border-bottom: 1px solid #aeaeae;
    display: flex;
    position: relative;
  }
  .grp {
    position: relative;
    display: flex;
    flex-direction: column;
    box-sizing: border-box;
    height: 85px;
    margin-top: 5px;
    border-right: 1px solid #c8c8c8;
  }
  .g1 { width: 99px; }
  .g2 { width: 277px; }
  .g3 { width: 55px; }
  .g4 { width: 43px; }
  .gbody {
    height: 63px;
    display: flex;
    padding-left: 3px;
  }
  .g2 .gbody { padding-left: 8px; }
  .g3 .gbody { padding-left: 2px; }
  .g4 .gbody { padding-left: 2px; }
  .gfoot {
    height: 22px;
    display: flex;
    align-items: center;
    justify-content: center;
    color: #0a7fa6;
    position: relative;
    padding-top: 8px;
    box-sizing: border-box;
  }
  .gfoot .tri {
    position: absolute;
    right: 7px;
    top: 12px;
  }
  .g1 .gfoot { padding-right: 16px; }
  .g2 .gfoot { padding-right: 19px; }
  .g3 .gfoot { justify-content: flex-start; padding-left: 2px; }
  .big {
    width: 52px;
    display: flex;
    flex-direction: column;
    align-items: center;
    padding-top: 0;
  }
  .big .ic {
    margin-top: 0;
  }
  .big > span {
    margin-top: 5px;
    line-height: 16px;
    color: #222;
  }
  .big > .i32 {
    margin-top: 1px;
  }
  .big.boxed {
    width: 38px;
    margin-left: 0;
  }
  .boxed > span {
    margin-top: 1px;
  }
  .boxed .tri {
    margin-top: 4px;
  }
  .g1 .boxed {
    margin-left: 1px;
  }
  .box {
    box-sizing: border-box;
    width: 38px;
    height: 35px;
    border: 1px solid #c4c4c4;
    border-radius: 4px;
    display: flex;
    align-items: center;
    justify-content: center;
    background: #f4f4f4;
  }
  .list {
    margin-left: 8px;
    margin-top: -2px;
    display: flex;
    flex-direction: column;
    gap: 6px;
  }
  .list div {
    display: flex;
    align-items: center;
    gap: 3px;
    height: 16px;
  }
  .rb-end {
    position: absolute;
    left: 1428px;
    top: 81px;
  }

  .toolbar {
    height: 60px;
    flex: none;
    box-sizing: border-box;
    border-bottom: 1px solid #aeaeae;
    display: flex;
    align-items: center;
    position: relative;
  }
  .menu {
    width: 86px;
    height: 52px;
    box-sizing: border-box;
    padding-left: 10px;
    border-right: 1px solid #c8c8c8;
    display: flex;
    align-items: center;
    gap: 4px;
    color: #111;
  }
  .menu .tri {
    margin-left: 2px;
  }
  .combo {
    box-sizing: border-box;
    height: 19px;
    background: #fff;
    border: 1px solid #aaa;
    display: flex;
    align-items: center;
    justify-content: space-between;
    padding: 0 5px 0 2px;
    color: #111;
    flex: none;
  }
  .combo.off {
    color: #999;
  }
  .combo.off .tri {
    border-top-color: #999;
  }
  .c1 { width: 133px; margin-left: 13px; }
  .c2 { width: 140px; margin-left: 8px; margin-right: 5px; }
  .c3 { width: 140px; margin-left: 4px; margin-right: 10px; }
  .c4 { width: 139px; }
  .tb {
    width: 24px;
    display: flex;
    justify-content: center;
    flex: none;
  }
  .tb.d { margin-left: 2px; }
  .tb.e { margin-left: 2px; }
  .t1 { margin: 0 5px 0 1px; }
  .t2 { margin: 0 2px 0 4px; }
  .stack {
    display: flex;
    flex-direction: column;
    gap: 9px;
  }
  .rgrid {
    margin-left: 5px;
    display: grid;
    grid-template-columns: repeat(6, 25px);
    row-gap: 6px;
    margin-top: -12px;
  }
  .rgrid span {
    display: flex;
    justify-content: center;
  }
  .tb-ends {
    position: absolute;
    left: 1428px;
    top: 48px;
  }

  .main {
    flex: 1;
    min-height: 0;
    display: flex;
    background: #f0f0f0;
  }
  .rail {
    width: 33px;
    flex: none;
    box-sizing: border-box;
    background: #bbb;
    border-right: 1px solid #999;
    display: flex;
    flex-direction: column;
  }
  .railgear {
    height: 24px;
    padding-left: 7px;
    display: flex;
    align-items: center;
    color: #444;
  }
  .railitem {
    height: 42px;
    display: flex;
    align-items: center;
    padding-left: 6px;
  }
  .railitem.a { margin-top: 17px; }
  .railitem.c {
    height: 44px;
    margin-left: 3px;
    padding-left: 3px;
    margin-right: -1px;
    background: #f0f0f0;
    border: 1px solid #aaa;
    border-right: 0;
    box-sizing: border-box;
  }
  .railitem.d { height: 42px; margin-top: -1px; }
  .railitem.e { height: 56px; margin-top: 5px; }
  .railitem.f { height: 50px; }
  .railitem.g { height: 58px; }
  .railitem.h { height: 42px; margin-top: -8px; }
  .railitem.h2 { height: 42px; }

  .nav {
    width: 331px;
    flex: none;
    box-sizing: border-box;
    border-right: 1px solid #aaa;
    padding: 0 10px 0 5px;
    display: flex;
    flex-direction: column;
  }
  .navhead {
    height: 28px;
    display: flex;
    align-items: center;
    justify-content: space-between;
    font-size: 12px;
    padding: 0 5px 0 4px;
    flex: none;
  }
  .maxbox {
    display: block;
    width: 12px;
    height: 11px;
    box-sizing: border-box;
    border: 1px solid #222;
    border-top-width: 2px;
    margin-top: 3px;
  }
  .tree {
    box-sizing: border-box;
    width: 315px;
    border: 1px solid #aaa;
    background: #fff;
    padding: 1px;
    flex: none;
  }
  .thead {
    height: 21px;
    display: grid;
    grid-template-columns: 200px 100px 1fr;
    background: #f0f0f0;
    border-bottom: 1px solid #d4d4d4;
    box-sizing: border-box;
    font-size: 12px;
    color: #333;
  }
  .tc {
    display: flex;
    align-items: center;
    padding-left: 6px;
    border-right: 1px solid #d4d4d4;
    overflow: hidden;
    white-space: nowrap;
  }
  .tc.rest {
    border-right: 0;
  }
  .up {
    display: block;
    margin-left: 18px;
    width: 0;
    height: 0;
    border-left: 5px solid transparent;
    border-right: 5px solid transparent;
    border-bottom: 5px solid #111;
  }
  .tbody {
    position: relative;
    height: 476px;
    overflow: hidden;
  }
  .lines {
    position: absolute;
    left: 0;
    top: 0;
    z-index: 1;
    pointer-events: none;
  }
  .row {
    height: 20px;
    box-sizing: border-box;
    display: grid;
    grid-template-columns: 200px 100px 1fr;
    border-bottom: 1px solid #e8e8e8;
    background: #fafafa;
    position: relative;
  }
  .row:nth-child(odd) {
    background: #f5f5f5;
  }
  .cn {
    position: relative;
    z-index: 2;
    display: flex;
    align-items: center;
    padding-left: 18px;
    border-right: 1px solid #e8e8e8;
    font-size: 12px;
    color: #222;
    height: 19px;
  }
  .tick {
    display: block;
    margin-left: 2px;
  }
  .exp {
    position: absolute;
    left: 4px;
    top: 4px;
    width: 11px;
    height: 11px;
    box-sizing: border-box;
    background: #fff;
    border: 1px solid #c8c8c8;
    font: 11px/9px "Liberation Sans", sans-serif;
    text-align: center;
    color: #111;
  }
  .cn.feat {
    padding-left: 40px;
  }
  .cb {
    display: block;
    width: 12px;
    height: 12px;
    box-sizing: border-box;
    border: 1.5px solid #111;
    background: #fff;
    margin-right: 2px;
  }
  .cb .ic {
    width: 10px;
    height: 10px;
  }
  .ri {
    width: 16px;
    display: block;
    margin-right: 4px;
  }
  .feat .ri {
    margin-right: 3px;
  }
  .rt {
    white-space: nowrap;
    padding-bottom: 2px;
  }
  .rt.red {
    color: #f56a6a;
  }
  .rt.bold {
    color: #f04848;
    font-weight: 700;
  }
  .cl {
    border-right: 1px solid #e8e8e8;
    display: flex;
    align-items: center;
    padding-left: 5px;
    height: 19px;
  }
  .hscroll {
    height: 16px;
    display: flex;
    align-items: center;
    justify-content: space-between;
    background: #fff;
    padding: 0 2px 0 2px;
  }
  .track {
    flex: 1;
    height: 14px;
    margin: 0 4px 0 5px;
  }
  .thumb {
    width: 216px;
    height: 14px;
    background: #c8c8c8;
  }
  .splitter {
    width: 315px;
    height: 5px;
    background: #aaa;
    flex: none;
  }
  .acc {
    height: 22px;
    width: 315px;
    flex: none;
    box-sizing: border-box;
    margin-top: 0;
    border-bottom: 2px solid #ccc;
    display: flex;
    align-items: center;
    justify-content: space-between;
    padding: 0 5px 0 7px;
    font-size: 14px;
    color: #0d7fa0;
    margin-bottom: 2px;
  }
  .acc svg {
    margin-top: -3px;
  }
  .splitter + .acc {
    margin-top: 2px;
    height: 22px;
  }

  .view {
    flex: 1;
    min-width: 0;
    display: flex;
    flex-direction: column;
  }
  .vtabs {
    height: 24px;
    flex: none;
    box-sizing: border-box;
    border-bottom: 2px solid #549fb9;
    display: flex;
    padding-left: 1px;
  }
  .vtab {
    width: 119px;
    height: 22px;
    box-sizing: border-box;
    padding-bottom: 2px;
    background: #549fb9;
    color: #fff;
    font-size: 12px;
    display: flex;
    align-items: center;
    padding-left: 6px;
    gap: 5px;
  }
  .vtab svg:last-child {
    margin-left: 2px;
  }
  .canvas {
    flex: 1;
    min-height: 0;
    position: relative;
    background: linear-gradient(#b8b9bb, #cfd0d2 40%, #e0e1e3 70%, #e4e5e7);
    overflow: hidden;
  }
  .scene {
    position: absolute;
    left: 0;
    top: 0;
    display: block;
  }
  .model path,
  .model rect,
  .model ellipse {
    vector-effect: non-scaling-stroke;
    stroke-linejoin: round;
  }
  .dk {
    fill: #93602c;
    stroke: #fca548;
    stroke-width: 2;
  }
  .tp {
    fill: #ffc95f;
    stroke: #fca548;
    stroke-width: 2;
  }
  .ln {
    fill: none;
    stroke: #fca548;
    stroke-width: 2;
  }
  .st {
    stroke: #fca548;
    stroke-width: 2;
  }
  .fill-step {
    fill: #a56e32;
    stroke: #fca548;
    stroke-width: 2;
  }
  .hole {
    fill: url(#holeG);
    stroke: #fca548;
    stroke-width: 2;
  }
  .wire {
    fill: none;
    stroke: #d8d8d8;
    stroke-width: 1;
  }
  .ax {
    font: 12px "Noto Sans", sans-serif;
  }
  .ax.grey {
    fill: #d8d8d8;
  }

  .status {
    height: 22px;
    flex: none;
    box-sizing: border-box;
    border-top: 1px solid #aaa;
    position: relative;
    display: flex;
    align-items: center;
    font-size: 11px;
    color: #111;
  }
  .s1 {
    margin-left: 3px;
    font-weight: 500;
    padding-bottom: 4px;
  }
  .s2 {
    position: absolute;
    left: 666px;
    font-weight: 500;
    padding-bottom: 4px;
  }
  .s3 {
    position: absolute;
    left: 1348px;
    display: flex;
    gap: 5px;
  }

  .taskbar {
    height: 40px;
    flex: none;
    position: relative;
    display: flex;
    align-items: center;
    background: linear-gradient(90deg, #233c47, #203648 50%, #1b2a42);
    color: #fff;
  }
  .start {
    margin-left: 16px;
  }
  .taskview {
    margin-left: 31px;
    margin-right: 20px;
  }
  .app-i {
    width: 49px;
    height: 40px;
    box-sizing: border-box;
    display: flex;
    align-items: center;
    justify-content: center;
    position: relative;
    flex: none;
  }
  .app-i.on::after {
    content: "";
    position: absolute;
    left: 4px;
    right: 4px;
    bottom: 0;
    height: 2px;
    background: #76b9ed;
  }
  .app-i.active {
    background: #4e626b;
  }
  .app-i.active::after {
    left: 0;
    right: 0;
  }
  .tray {
    position: absolute;
    left: 1165px;
    top: 0;
    height: 40px;
    width: 275px;
    display: flex;
    align-items: center;
  }
  .tr {
    margin-left: 9px;
  }
  .zh {
    font-size: 12px;
    margin-left: 8px;
    margin-right: 14px;
  }
  .clock {
    width: 88px;
    margin-left: 1px;
    display: flex;
    flex-direction: column;
    align-items: center;
    font-size: 12px;
    line-height: 18px;
    padding-top: 1px;
  }
  .note {
    margin-left: -2px;
  }
  .mark {
    position: absolute;
    left: 1268px;
    top: 879px;
    font: 14px/18px "Liberation Serif", "Noto Sans CJK SC", serif;
    letter-spacing: 0.6px;
    color: #a8aeb4;
    white-space: nowrap;
  }

  .tip {
    position: absolute;
    left: 688px;
    top: 452px;
    width: 211px;
    height: 32px;
    box-sizing: border-box;
    background: #f0f0f0;
    border: 1px solid #aaa;
    display: flex;
    align-items: center;
    font-size: 12.4px;
    color: #222;
  }
  .val {
    padding-bottom: 3px;
  }
  .grip {
    display: block;
    width: 6px;
    height: 22px;
    margin: 0 7px 0 2px;
    background-image: radial-gradient(circle, #aaa 1.1px, transparent 1.2px);
    background-size: 3px 4px;
  }
  .c5 {
    width: 75px;
    height: 23px;
    font-size: 12px;
    margin-right: 3px;
    padding: 0 5px 0 4px;
  }
  .c5 .tri {
    border-left-width: 4px;
    border-right-width: 4px;
    border-top-width: 4px;
  }

  .dialog {
    position: absolute;
    left: 1088px;
    top: 87px;
    width: 328px;
    height: 250px;
    box-sizing: border-box;
    background: #dcdcdc;
    border: 1px solid #aaa;
    border-top: 0;
    font-size: 12px;
    display: flex;
    flex-direction: column;
  }
  .dtitle {
    margin: 0 -1px;
    height: 24px;
    flex: none;
    background: #549fb9;
    color: #fff;
    display: flex;
    align-items: center;
    font-size: 14px;
    padding: 0 9px 0 7px;
    gap: 7px;
  }
  .dgear {
    width: 15px;
    color: #fff;
  }
  .dname {
    margin-right: auto;
  }
  .dsec {
    margin: 0 5px;
    background: #f0f0f0;
    border-bottom: 1px solid #999;
    box-sizing: border-box;
  }
  .dsec.one {
    margin-top: 4px;
    height: 71px;
  }
  .dsec.two {
    margin-top: 3px;
    height: 86px;
  }
  .dhead {
    height: 27px;
    box-sizing: border-box;
    padding: 0 6px 4px 7px;
    display: flex;
    align-items: center;
    justify-content: space-between;
    font-size: 14px;
    color: #0d6f96;
  }
  .sel {
    display: flex;
    gap: 2px;
    margin: 3px 9px 0;
    height: 32px;
  }
  .selmain {
    flex: 1;
    background: #ffdd75;
    display: flex;
    align-items: center;
    padding-left: 2px;
    gap: 3px;
    color: #222;
  }
  .selcube {
    width: 32px;
    background: #ffdd75;
    display: flex;
    align-items: center;
    justify-content: center;
  }
  .chk {
    display: flex;
    align-items: center;
    gap: 5px;
    margin: 7px 9px 0;
    height: 14px;
    color: #222;
  }
  .chk i {
    display: block;
    width: 13px;
    height: 13px;
    box-sizing: border-box;
    border: 1px solid #333;
    background: #fff;
  }
  .need {
    display: flex;
    align-items: center;
    justify-content: space-between;
    margin: 5px 9px 0;
    color: #999;
  }
  .c6 {
    width: 141px;
    height: 25px;
    background: #f6f6f6;
    font-size: 12px;
    padding: 0 4px 0 4px;
  }
  .c6 .tri {
    border-left-width: 4px;
    border-right-width: 4px;
    border-top-width: 4px;
  }
  .dmore {
    margin: 0 5px;
    height: 17px;
    flex: none;
    display: flex;
    align-items: center;
    justify-content: center;
    border-bottom: 1px solid #e8e8e8;
  }
  .dbtns {
    display: flex;
    justify-content: flex-end;
    gap: 5px;
    padding: 8px 15px 0 0;
  }
  .dbtns button {
    box-sizing: border-box;
    width: 54px;
    height: 25px;
    padding: 0;
    border: 1px solid #999;
    background: #f0f0f0;
    font: 12px "Noto Sans", "Noto Sans CJK SC", sans-serif;
    color: #222;
  }
  .dbtns .ok {
    background: #6cb0c8;
    border-color: #6cb0c8;
    color: #e8f4f8;
  }
</style>
